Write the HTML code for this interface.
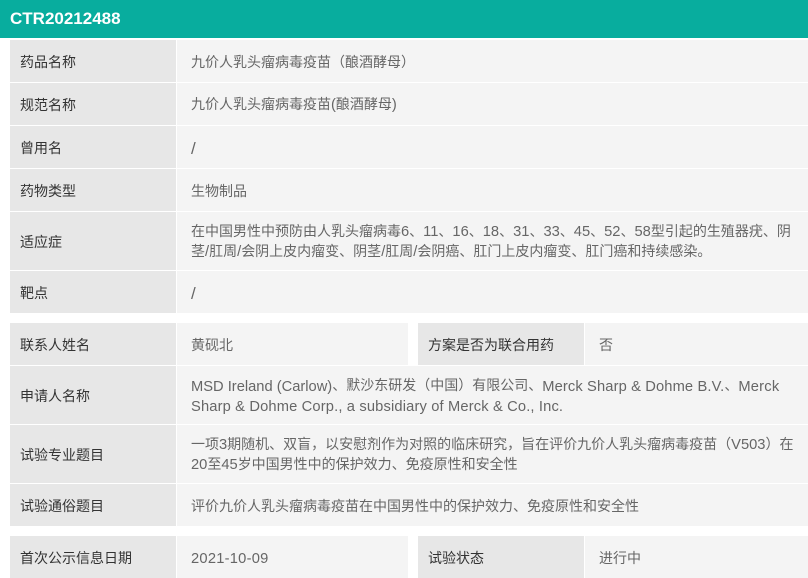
<!DOCTYPE html>
<html lang="zh-CN">
<head>
<meta charset="utf-8">
<style>
html,body{margin:0;padding:0;background:#fff;}
body{width:808px;height:571px;overflow:hidden;position:relative;font-family:"Liberation Sans","Noto Sans CJK SC",sans-serif;font-size:14px;}
.h{position:absolute;left:0;top:0;width:808px;height:38px;background:#08ad9e;color:#fff;font-weight:bold;font-size:17px;line-height:37px;padding-left:10px;box-sizing:border-box;}
.c{position:absolute;box-sizing:border-box;display:flex;align-items:center;line-height:19px;overflow:hidden;padding-top:2px;}
.l{background:#e7e7e7;color:#333;padding-left:10px;}
.v{background:#f4f4f4;color:#666;padding-left:14px;}
.c span{display:block;white-space:nowrap;}
i{font-style:normal;font-size:14.7px;}
i.e{position:relative;top:1px;}
i.s{font-size:17px;position:relative;top:1px;}
</style>
</head>
<body>
<div class="h">CTR20212488</div>

<div class="c l" style="left:10px;top:40px;width:166px;height:42px">药品名称</div>
<div class="c v" style="left:177px;top:40px;width:631px;height:42px">九价人乳头瘤病毒疫苗（酿酒酵母）</div>

<div class="c l" style="left:10px;top:83px;width:166px;height:42px">规范名称</div>
<div class="c v" style="left:177px;top:83px;width:631px;height:42px"><span>九价人乳头瘤病毒疫苗<i>(</i>酿酒酵母<i>)</i></span></div>

<div class="c l" style="left:10px;top:126px;width:166px;height:42px">曾用名</div>
<div class="c v" style="left:177px;top:126px;width:631px;height:42px"><span><i class="s">/</i></span></div>

<div class="c l" style="left:10px;top:169px;width:166px;height:42px">药物类型</div>
<div class="c v" style="left:177px;top:169px;width:631px;height:42px">生物制品</div>

<div class="c l" style="left:10px;top:212px;width:166px;height:58px">适应症</div>
<div class="c v" style="left:177px;top:212px;width:631px;height:58px"><span>在中国男性中预防由人乳头瘤病毒<i>6</i>、<i>11</i>、<i>16</i>、<i>18</i>、<i>31</i>、<i>33</i>、<i>45</i>、<i>52</i>、<i>58</i>型引起的生殖器疣、阴<br>茎<i>/</i>肛周<i>/</i>会阴上皮内瘤变、阴茎<i>/</i>肛周<i>/</i>会阴癌、肛门上皮内瘤变、肛门癌和持续感染。</span></div>

<div class="c l" style="left:10px;top:271px;width:166px;height:42px">靶点</div>
<div class="c v" style="left:177px;top:271px;width:631px;height:42px"><span><i class="s">/</i></span></div>

<div class="c l" style="left:10px;top:323px;width:166px;height:42px">联系人姓名</div>
<div class="c v" style="left:177px;top:323px;width:231px;height:42px">黄砚北</div>
<div class="c l" style="left:418px;top:323px;width:166px;height:42px">方案是否为联合用药</div>
<div class="c v" style="left:585px;top:323px;width:223px;height:42px">否</div>

<div class="c l" style="left:10px;top:366px;width:166px;height:58px">申请人名称</div>
<div class="c v" style="left:177px;top:366px;width:631px;height:58px"><span><i class="e">MSD Ireland (Carlow)</i>、默沙东研发（中国）有限公司、<i class="e" style="letter-spacing:.13px">Merck Sharp &amp; Dohme B.V.</i>、<i class="e" style="letter-spacing:.2px">Merck</i><br><i class="e" style="letter-spacing:.15px">Sharp &amp; Dohme Corp., a subsidiary of Merck &amp; Co., Inc.</i></span></div>

<div class="c l" style="left:10px;top:425px;width:166px;height:58px">试验专业题目</div>
<div class="c v" style="left:177px;top:425px;width:631px;height:58px"><span>一项<i>3</i>期随机、双盲，以安慰剂作为对照的临床研究，旨在评价九价人乳头瘤病毒疫苗（<i>V503</i>）在<br><i>20</i>至<i>45</i>岁中国男性中的保护效力、免疫原性和安全性</span></div>

<div class="c l" style="left:10px;top:484px;width:166px;height:42px">试验通俗题目</div>
<div class="c v" style="left:177px;top:484px;width:631px;height:42px">评价九价人乳头瘤病毒疫苗在中国男性中的保护效力、免疫原性和安全性</div>

<div class="c l" style="left:10px;top:536px;width:166px;height:42px">首次公示信息日期</div>
<div class="c v" style="left:177px;top:536px;width:231px;height:42px"><span><i class="e" style="letter-spacing:.24px">2021-10-09</i></span></div>
<div class="c l" style="left:418px;top:536px;width:166px;height:42px">试验状态</div>
<div class="c v" style="left:585px;top:536px;width:223px;height:42px">进行中</div>
</body>
</html>
